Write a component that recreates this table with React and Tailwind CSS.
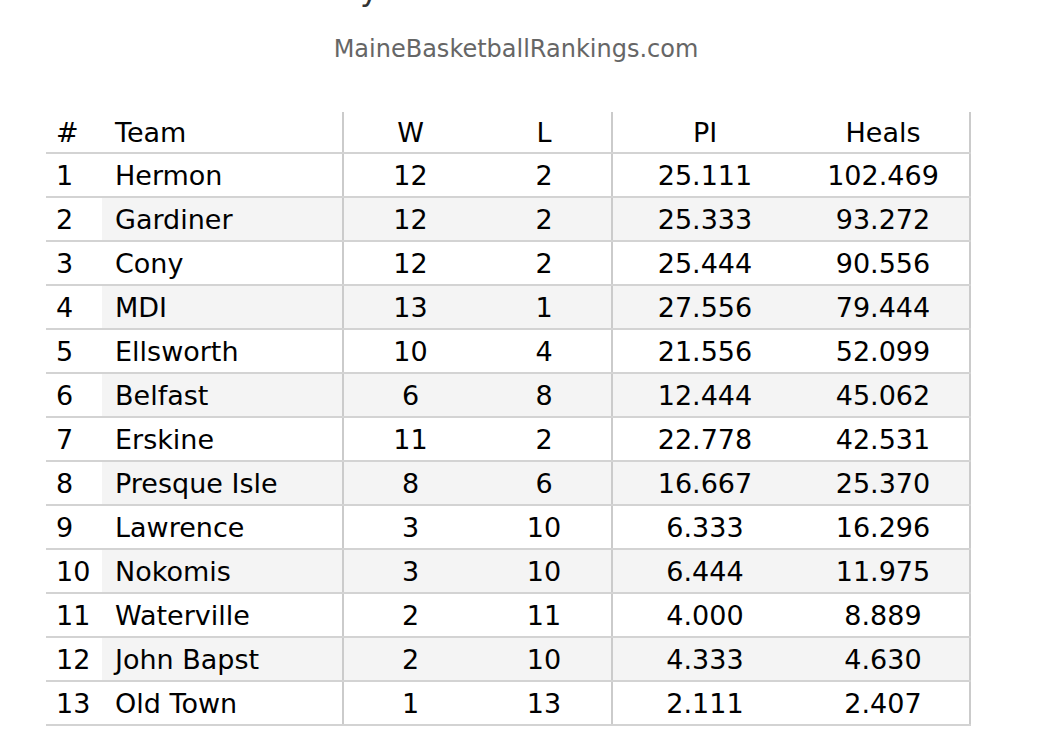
import React from 'react';

const rows = [
    [1, 'Hermon', 12, 2, '25.111', '102.469'],
    [2, 'Gardiner', 12, 2, '25.333', '93.272'],
    [3, 'Cony', 12, 2, '25.444', '90.556'],
    [4, 'MDI', 13, 1, '27.556', '79.444'],
    [5, 'Ellsworth', 10, 4, '21.556', '52.099'],
    [6, 'Belfast', 6, 8, '12.444', '45.062'],
    [7, 'Erskine', 11, 2, '22.778', '42.531'],
    [8, 'Presque Isle', 8, 6, '16.667', '25.370'],
    [9, 'Lawrence', 3, 10, '6.333', '16.296'],
    [10, 'Nokomis', 3, 10, '6.444', '11.975'],
    [11, 'Waterville', 2, 11, '4.000', '8.889'],
    [12, 'John Bapst', 2, 10, '4.333', '4.630'],
    [13, 'Old Town', 1, 13, '2.111', '2.407'],
];

const Row = ({ cells, shaded, header }) => {
    const [rank, team, w, l, pi, heals] = cells;
    const bg = shaded ? 'bg-[#f4f4f4]' : '';
    const h = header ? 'h-[42px]' : 'h-[44px]';
    return (
        <div className={`grid grid-cols-[56px_240px_135px_134px_186px_174px] border-b-2 border-[#d3d3d3] ${h}`}>
            <div className="flex items-center pl-[10px]">{rank}</div>
            <div className={`flex items-center pl-[13px] ${bg}`}>{team}</div>
            <div className={`flex items-center justify-center border-l-2 border-[#cbcbcb] ${bg}`}>{w}</div>
            <div className={`flex items-center justify-center ${bg}`}>{l}</div>
            <div className={`flex items-center justify-center border-l-2 border-[#cbcbcb] ${bg}`}>{pi}</div>
            <div className={`flex items-center justify-center border-r-2 border-[#cbcbcb] ${bg}`}>{heals}</div>
        </div>
    );
};

const App = () => {
    return (
        <div className="min-h-[754px] w-[1060px] bg-white text-black" style={{ fontFamily: '"DejaVu Sans", sans-serif' }}>
            {/* title, only its bottom edge is on screen */}
            <div className="h-[10px] overflow-hidden">
                <div className="mt-[-27px] pl-[360px] text-[32px] leading-[32px] text-[#333]">y</div>
            </div>

            <div className="mt-[25px] text-center text-[24px] leading-[28px] text-[#666] pr-[28px]">
                MaineBasketballRankings.com
            </div>

            <div className="mt-[49px] ml-[46px] w-fit text-[27px] leading-none">
                <Row header cells={['#', 'Team', 'W', 'L', 'PI', 'Heals']} />
                {rows.map((r, i) => (
                    <Row key={r[0]} cells={r} shaded={i % 2 === 1} />
                ))}
            </div>
        </div>
    );
};

export default App;
